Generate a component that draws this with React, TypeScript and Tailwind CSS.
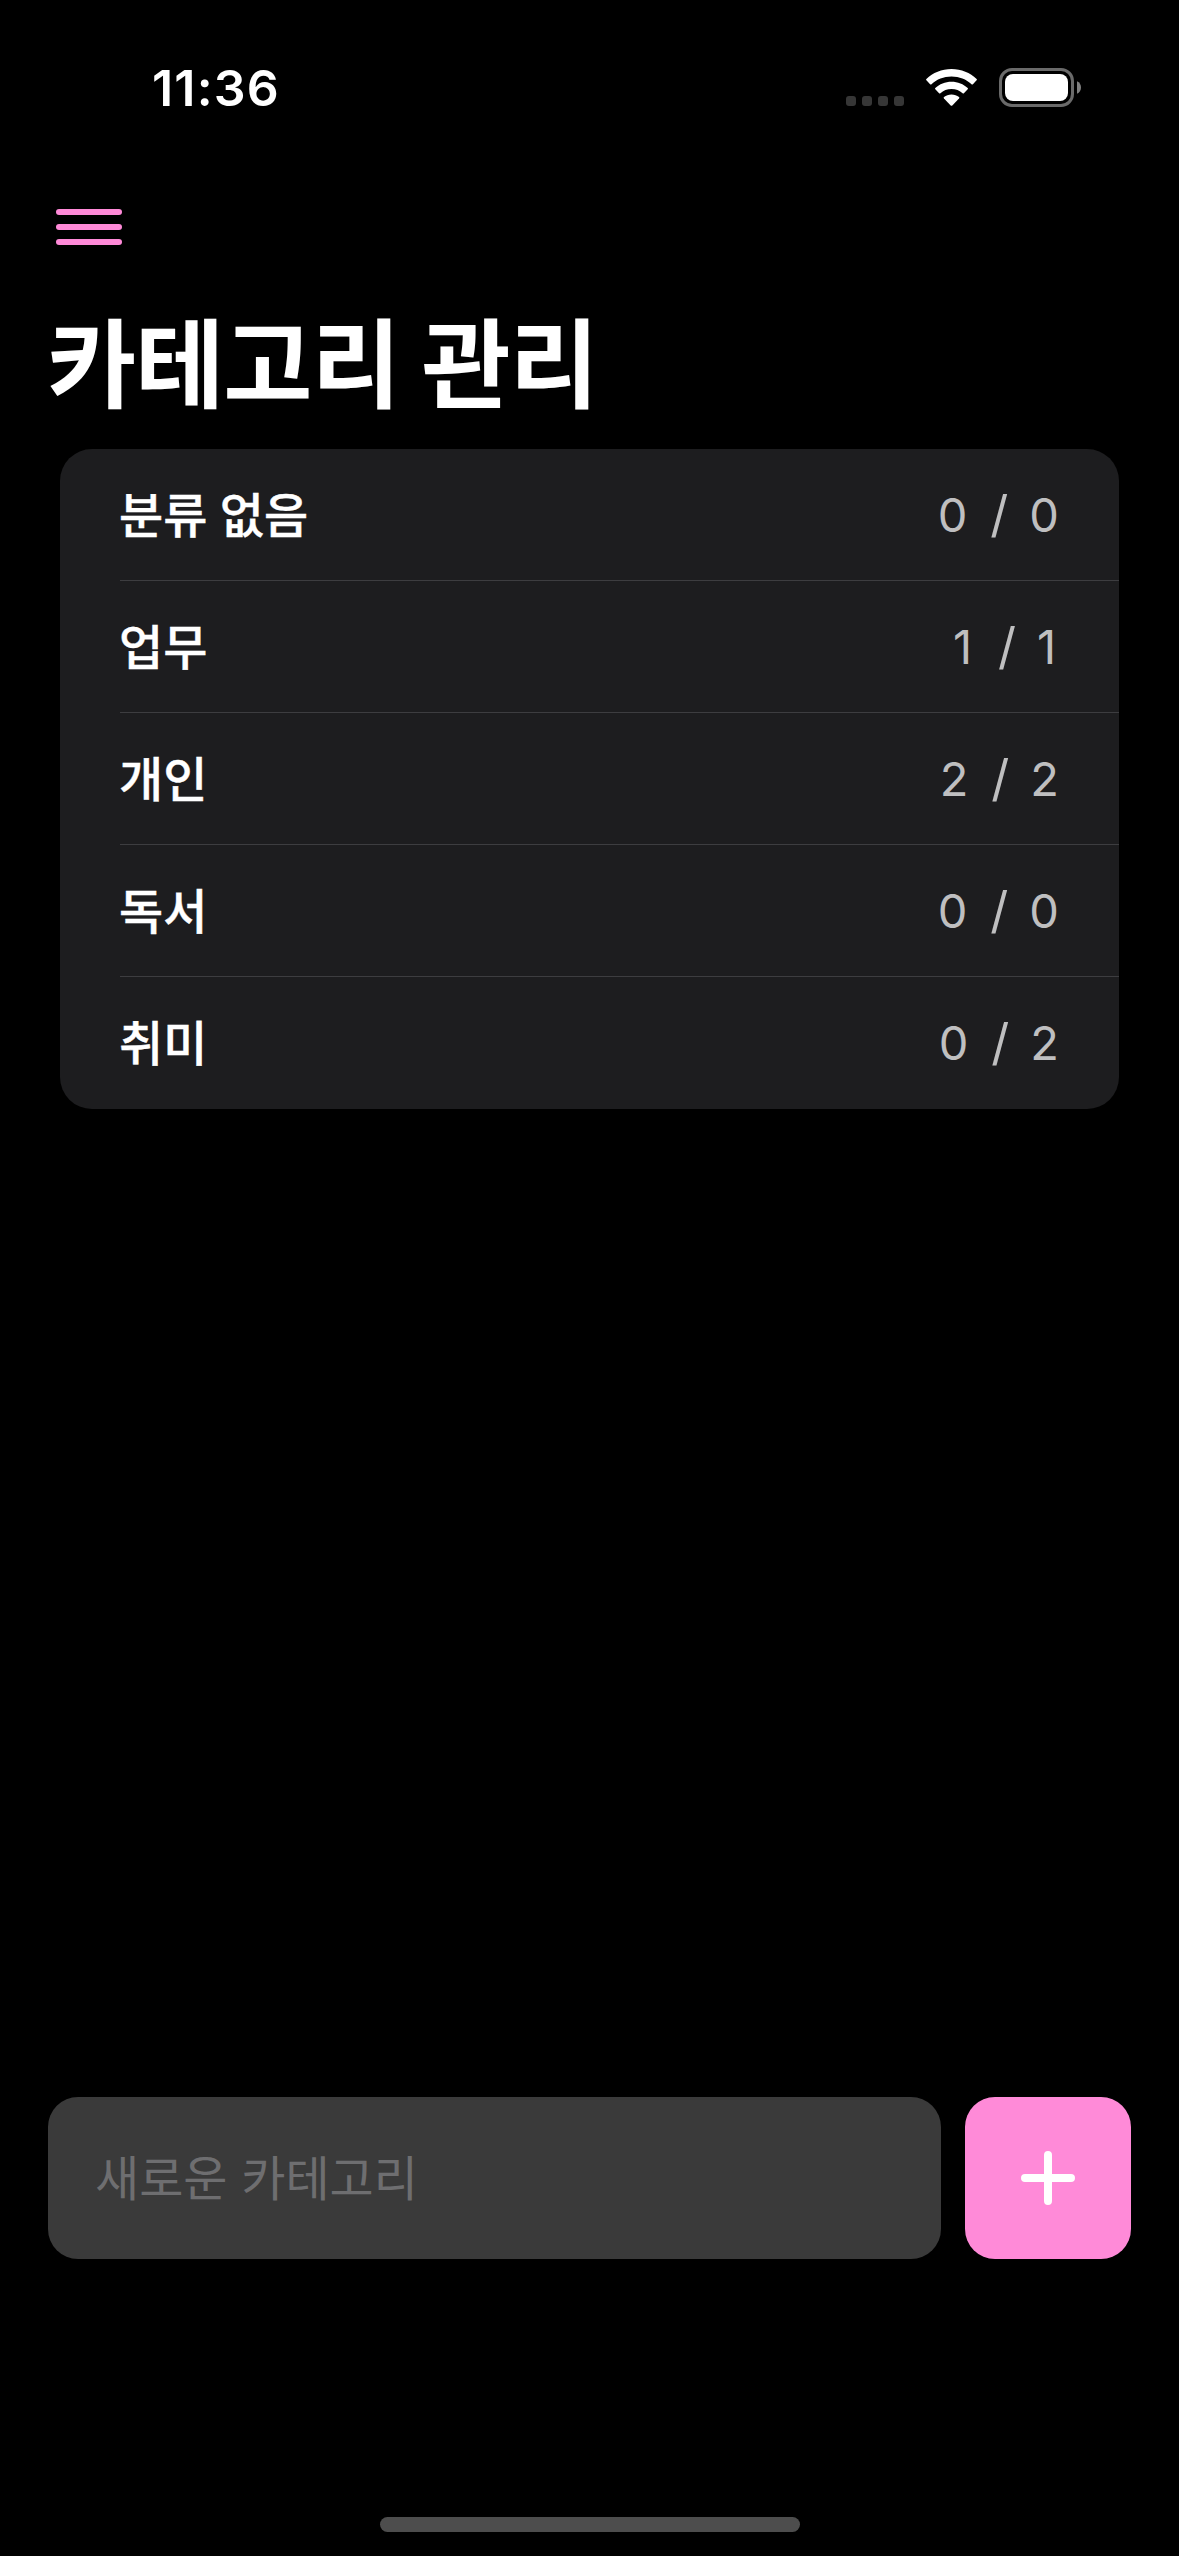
const categories = [
  { name: '분류 없음', done: 0, total: 0 },
  { name: '업무', done: 1, total: 1 },
  { name: '개인', done: 2, total: 2 },
  { name: '독서', done: 0, total: 0 },
  { name: '취미', done: 0, total: 2 },
];

function StatusBar() {
  return (
    <header className="flex h-[177px] items-start justify-between pl-[152px] pr-[98px] pt-[58px]">
      <time className="text-[50px] font-semibold leading-[60px] tracking-[1.2px]">11:36</time>
      <div className="mt-[10px] flex h-[39px] items-start">
        <div className="mt-[28px] flex gap-[6px]">
          <i className="size-[10px] rounded-[3px] bg-[#363636]" />
          <i className="size-[10px] rounded-[3px] bg-[#363636]" />
          <i className="size-[10px] rounded-[3px] bg-[#363636]" />
          <i className="size-[10px] rounded-[3px] bg-[#363636]" />
        </div>
        <svg className="ml-[22px] mt-px" width="51" height="37" viewBox="0 0 51 37" fill="#fff">
          <path d="M25.5 0C15.7 0 6.800 3.800.4 10Q-.2 10.700.4 11.300L4.100 15.200Q4.800 15.800 5.500 15.200C10.700 10.300 17.700 7.500 25.500 7.500S40.300 10.300 45.500 15.200Q46.200 15.800 46.900 15.200L50.600 11.300Q51.200 10.700 50.600 10C44.200 3.800 35.300 0 25.500 0Z" />
          <path d="M25.500 12.700C19.200 12.700 13.500 15.100 9.300 19Q8.700 19.600 9.300 20.300L13.100 24.200Q13.700 24.800 14.400 24.200C17.300 21.600 21.200 20 25.500 20S33.700 21.600 36.600 24.200Q37.300 24.800 37.900 24.200L41.700 20.300Q42.300 19.600 41.700 19C37.500 15.100 31.800 12.700 25.500 12.700Z" />
          <path d="M25.500 25.400C22.600 25.400 20 26.400 18 28.100Q17.400 28.700 18 29.400L24.700 36.400Q25.500 37.200 26.300 36.400L33 29.400Q33.600 28.700 33 28.100C31 26.400 28.400 25.400 25.500 25.400Z" />
        </svg>
        <svg className="ml-[22px]" width="82" height="39" viewBox="0 0 82 39">
          <rect x="1.500" y="1.500" width="72" height="36" rx="11.500" fill="none" stroke="#6a6a6a" strokeWidth="3" />
          <rect x="6" y="6" width="63" height="27" rx="8" fill="#fff" />
          <path d="M78 13.200C80.600 14.300 82 16.600 82 19.500S80.600 24.700 78 25.800Z" fill="#808080" />
        </svg>
      </div>
    </header>
  );
}

export default function App() {
  return (
    <div className="flex h-[2556px] w-[1179px] flex-col bg-black font-['Inter','Noto_Sans_CJK_KR',sans-serif] text-white">
      <StatusBar />

      <button aria-label="메뉴" className="ml-[56px] mt-[32px] flex w-[66px] flex-col gap-[9px]">
        <span className="h-[6px] w-full rounded-full bg-[#ff8ad8]" />
        <span className="h-[6px] w-full rounded-full bg-[#ff8ad8]" />
        <span className="h-[6px] w-full rounded-full bg-[#ff8ad8]" />
      </button>

      <h1 className="ml-[47px] mt-[48px] h-[156px] whitespace-nowrap font-['Noto_Sans_CJK_KR',sans-serif] text-[97px] font-bold leading-[130px] tracking-[-1.1px] [word-spacing:1px]">
        카테고리 관리
      </h1>

      <ul className="mx-[60px] flex flex-col overflow-hidden rounded-[32px] bg-[#1d1d1f]">
        {categories.map((category) => (
          <li key={category.name} className="ml-[60px] flex h-[132px] items-center justify-between border-b border-[#3d3d40] pr-[60px] last:border-transparent">
            <span className="-ml-px pb-[6px] font-['Noto_Sans_CJK_KR',sans-serif] text-[48px] font-medium tracking-[0.2px] [-webkit-text-stroke:0.4px_white] [word-spacing:1px]">
              {category.name}
            </span>
            <span className="flex items-baseline text-[47px] leading-[60px] text-[#bfbfc0]">
              <span className="min-w-[22px]">{category.done}</span>
              <span className="ml-[23px] mr-[21px] text-[50px] leading-[60px]">/</span>
              <span className="min-w-[22px]">{category.total}</span>
            </span>
          </li>
        ))}
      </ul>

      <form className="mt-[988px] flex h-[162px] gap-[24px] px-[48px]">
        <input
          className="w-[893px] rounded-[30px] bg-[#3a3a3a] pb-[6px] pl-[47px] pr-[48px] font-['Noto_Sans_CJK_KR',sans-serif] text-[48px] placeholder:text-[#6e6e70] placeholder:opacity-100 [word-spacing:3px]"
          placeholder="새로운 카테고리"
        />
        <button type="button" aria-label="추가" className="flex flex-1 items-center justify-center rounded-[30px] bg-[#ff8ad8]">
          <svg width="54" height="54" viewBox="0 0 54 54" stroke="#fff" strokeWidth="8" strokeLinecap="round">
            <path d="M27 4v46M4 27h46" />
          </svg>
        </button>
      </form>

      <div className="mx-auto mb-[24px] mt-auto h-[15px] w-[420px] rounded-full bg-[#4d4d4d]" />
    </div>
  );
}
